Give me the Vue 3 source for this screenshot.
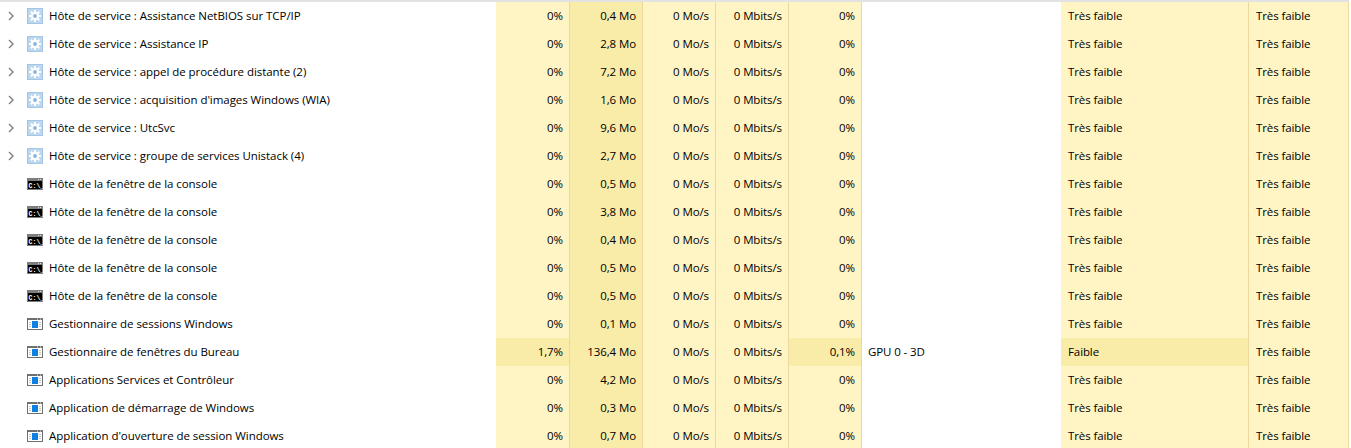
<script setup>
const tf = 'Très faible'
const rows = [
  ['svc', 'Hôte de service : Assistance NetBIOS sur TCP/IP', '0,4'],
  ['svc', 'Hôte de service : Assistance IP', '2,8'],
  ['svc', 'Hôte de service : appel de procédure distante (2)', '7,2'],
  ['svc', "Hôte de service : acquisition d'images Windows (WIA)", '1,6'],
  ['svc', 'Hôte de service : UtcSvc', '9,6'],
  ['svc', 'Hôte de service : groupe de services Unistack (4)', '2,7'],
  ['con', 'Hôte de la fenêtre de la console', '0,5'],
  ['con', 'Hôte de la fenêtre de la console', '3,8'],
  ['con', 'Hôte de la fenêtre de la console', '0,4'],
  ['con', 'Hôte de la fenêtre de la console', '0,5'],
  ['con', 'Hôte de la fenêtre de la console', '0,5'],
  ['app', 'Gestionnaire de sessions Windows', '0,1'],
  ['app', 'Gestionnaire de fenêtres du Bureau', '136,4', { cpu: '1,7%', gpu: '0,1%', engine: 'GPU 0 - 3D', power: 'Faible' }],
  ['app', 'Applications Services et Contrôleur', '4,2'],
  ['app', 'Application de démarrage de Windows', '0,3'],
  ["app", "Application d'ouverture de session Windows", '0,7'],
].map(([kind, name, mem, hot = {}]) => ({ kind, name, mem, hot }))
const teeth = [0, 45, 90, 135]
</script>

<template>
  <div class="page">
    <div class="topbar"></div>
    <div v-for="(r, i) in rows" :key="i" class="row">
      <div class="name">
        <svg v-if="r.kind === 'svc'" class="chev" width="6" height="10" viewBox="0 0 6 10">
          <path d="M1 1l4 4-4 4" fill="none" stroke="#7f7f7f" stroke-width="1.4" />
        </svg>
        <svg v-if="r.kind === 'svc'" class="icon" width="16" height="16" viewBox="0 0 16 16">
          <rect width="16" height="16" fill="#a6c6e6" />
          <rect x="1" y="1" width="14" height="14" fill="#bcd6ef" />
          <g fill="#fff">
            <rect v-for="t in teeth" :key="t" x="7" y="2" width="2" height="12" :transform="`rotate(${t} 8 8)`" />
            <circle cx="8" cy="8" r="4" />
          </g>
          <circle cx="8" cy="8" r="1.9" fill="#86b4e0" />
        </svg>
        <svg v-else-if="r.kind === 'con'" class="icon" width="16" height="16" viewBox="0 0 16 16">
          <rect y="2" width="16" height="12" fill="#7d7d7d" />
          <rect x="11" y="3" width="1" height="1" fill="#ddd" />
          <rect x="13" y="3" width="1" height="1" fill="#ddd" />
          <rect x="1" y="5" width="14" height="8" fill="#000" />
          <text x="1.6" y="11.6" class="prompt">C:\_</text>
        </svg>
        <svg v-else class="icon" width="16" height="16" viewBox="0 0 16 16">
          <rect y="2" width="16" height="12" fill="#707070" />
          <rect x="1" y="4" width="14" height="9" fill="#fff" />
          <rect x="10" y="2.5" width="1" height="1" fill="#e8e8e8" />
          <rect x="13" y="2.5" width="1" height="1" fill="#e8e8e8" />
          <rect x="5" y="5" width="6" height="7" fill="#0f7fe0" />
          <path d="M2 6.5h2M2 8.5h2M2 10.5h2M12 6.5h2M12 8.5h2M12 10.5h2" stroke="#c4c4c4" stroke-width="1" />
        </svg>
        <span class="label">{{ r.name }}</span>
      </div>
      <div class="cell num" :class="{ hot: r.hot.cpu }">{{ r.hot.cpu || '0%' }}</div>
      <div class="cell num hot">{{ r.mem }} Mo</div>
      <div class="cell num">0 Mo/s</div>
      <div class="cell num">0 Mbits/s</div>
      <div class="cell num" :class="{ hot: r.hot.gpu }">{{ r.hot.gpu || '0%' }}</div>
      <div class="engine">{{ r.hot.engine }}</div>
      <div class="cell txt" :class="{ hot: r.hot.power }">{{ r.hot.power || tf }}</div>
      <div class="cell txt">{{ tf }}</div>
    </div>
  </div>
</template>

<style scoped>
.page {
  width: 1351px;
  height: 448px;
  overflow: hidden;
  background: #fff;
  color: #000;
  font: 11.5px/28px "Open Sans", "Noto Sans", sans-serif;
}
.topbar {
  width: 1349px;
  height: 2px;
  background: #e2e2e2;
}
.row {
  display: grid;
  grid-template-columns: 496px 74px 73px 73px 73px 73px 199px 188px 100px;
  height: 28px;
}
.name {
  position: relative;
  display: flex;
  align-items: center;
  padding-left: 27px;
  white-space: nowrap;
}
.chev {
  position: absolute;
  left: 8px;
  top: 9px;
}
.icon {
  flex: none;
  margin-right: 6px;
}
.label {
  letter-spacing: -0.05px;
}
.prompt {
  fill: #fff;
  font: bold 6.5px "Liberation Mono", monospace;
}
.cell {
  background: #fff4c4;
  border-right: 1px solid #ecd9a2;
  padding: 0 6px;
  letter-spacing: -0.1px;
  white-space: nowrap;
}
.num {
  text-align: right;
}
.txt {
  padding-left: 7px;
}
.hot {
  background: #f9eca8;
}
.engine {
  padding-left: 6px;
  letter-spacing: -0.1px;
}
</style>
